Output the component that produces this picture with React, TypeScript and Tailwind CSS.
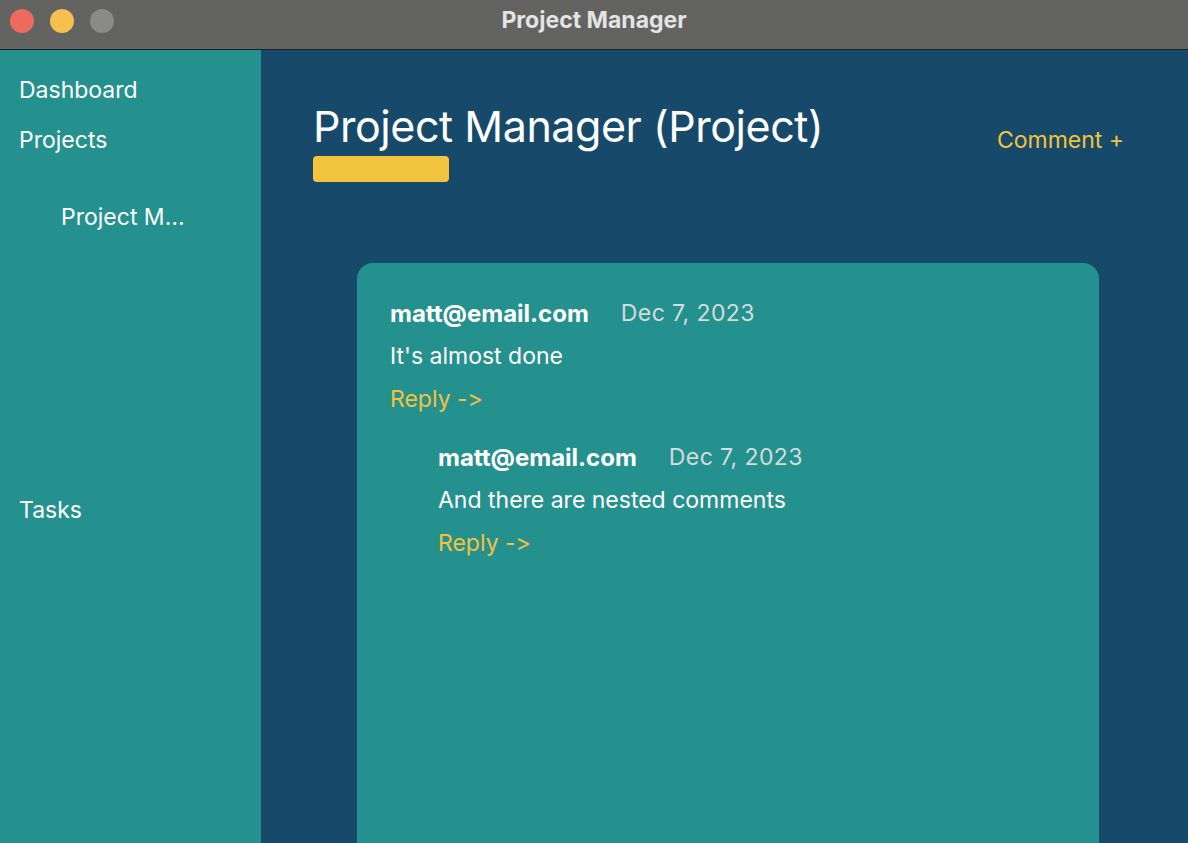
import React from "react";

const font = { fontFamily: "Inter, 'Noto Sans', sans-serif" };

function Comment({ email, date, text }: { email: string; date: string; text: string }) {
  return (
    <div className="flex flex-col">
      <div className="flex items-center h-[43px] gap-[32px]">
        <span className="text-[24px] font-bold text-white">{email}</span>
        <span className="text-[23px] text-[#d3dcdc] tracking-[0.4px]">{date}</span>
      </div>
      <div className="flex items-center h-[43px] text-[23px] text-white">{text}</div>
      <div className="flex items-center h-[43px] text-[23px] text-[#f2c43d] [font-feature-settings:'calt'_0,'liga'_0]">Reply -&gt;</div>
    </div>
  );
}

export default function App() {
  return (
    <div className="w-[1188px] h-[843px] overflow-hidden flex flex-col" style={font}>
      <div className="h-[50px] shrink-0 bg-[#636361] border-b border-[#1e1e1e] flex items-start pt-[9px] relative">
        <div className="flex items-center gap-[16px] pl-[10px]">
          <span className="w-[24px] h-[24px] rounded-full bg-[#ed6a5e]" />
          <span className="w-[24px] h-[24px] rounded-full bg-[#f5c04f]" />
          <span className="w-[24px] h-[24px] rounded-full bg-[#8a8a88]" />
        </div>
        <div className="absolute inset-x-0 top-0 h-[41px] flex items-center justify-center text-[23px] font-bold text-[#e4e4e4]">
          Project Manager
        </div>
      </div>
      <div className="flex flex-1 min-h-0">
        <div className="w-[261px] shrink-0 bg-[#25918f] flex flex-col text-white text-[23px]">
          <div className="pl-[19px] mt-[25px] h-[30px] flex items-center">Dashboard</div>
          <div className="pl-[19px] mt-[20px] h-[30px] flex items-center">Projects</div>
          <div className="pl-[61px] pr-[70px] mt-[47px] h-[30px] flex items-center">
            <span className="truncate">Project Manager</span>
          </div>
          <div className="pl-[19px] mt-[263px] h-[30px] flex items-center">Tasks</div>
        </div>
        <div className="flex-1 bg-[#174a6a] flex flex-col pl-[52px] pr-[64px]">
          <div className="flex items-start justify-between pt-[49px]">
            <div className="flex flex-col">
              <div className="text-[43px] leading-[54px] text-white tracking-[-0.45px]">Project Manager (Project)</div>
              <div className="mt-[3px] w-[136px] h-[26px] rounded-[4px] bg-[#f2c43d]" />
            </div>
            <div className="mt-[24px] text-[23px] text-[#f2c43d]">Comment +</div>
          </div>
          <div className="ml-[44px] mr-[25px] mt-[81px] h-[600px] shrink-0 rounded-[16px] bg-[#25918f] pl-[33px] pt-[29px] flex flex-col">
            <Comment email="matt@email.com" date="Dec 7, 2023" text="It's almost done" />
            <div className="pl-[48px] pt-[15px]">
              <Comment email="matt@email.com" date="Dec 7, 2023" text="And there are nested comments" />
            </div>
          </div>
        </div>
      </div>
    </div>
  );
}
